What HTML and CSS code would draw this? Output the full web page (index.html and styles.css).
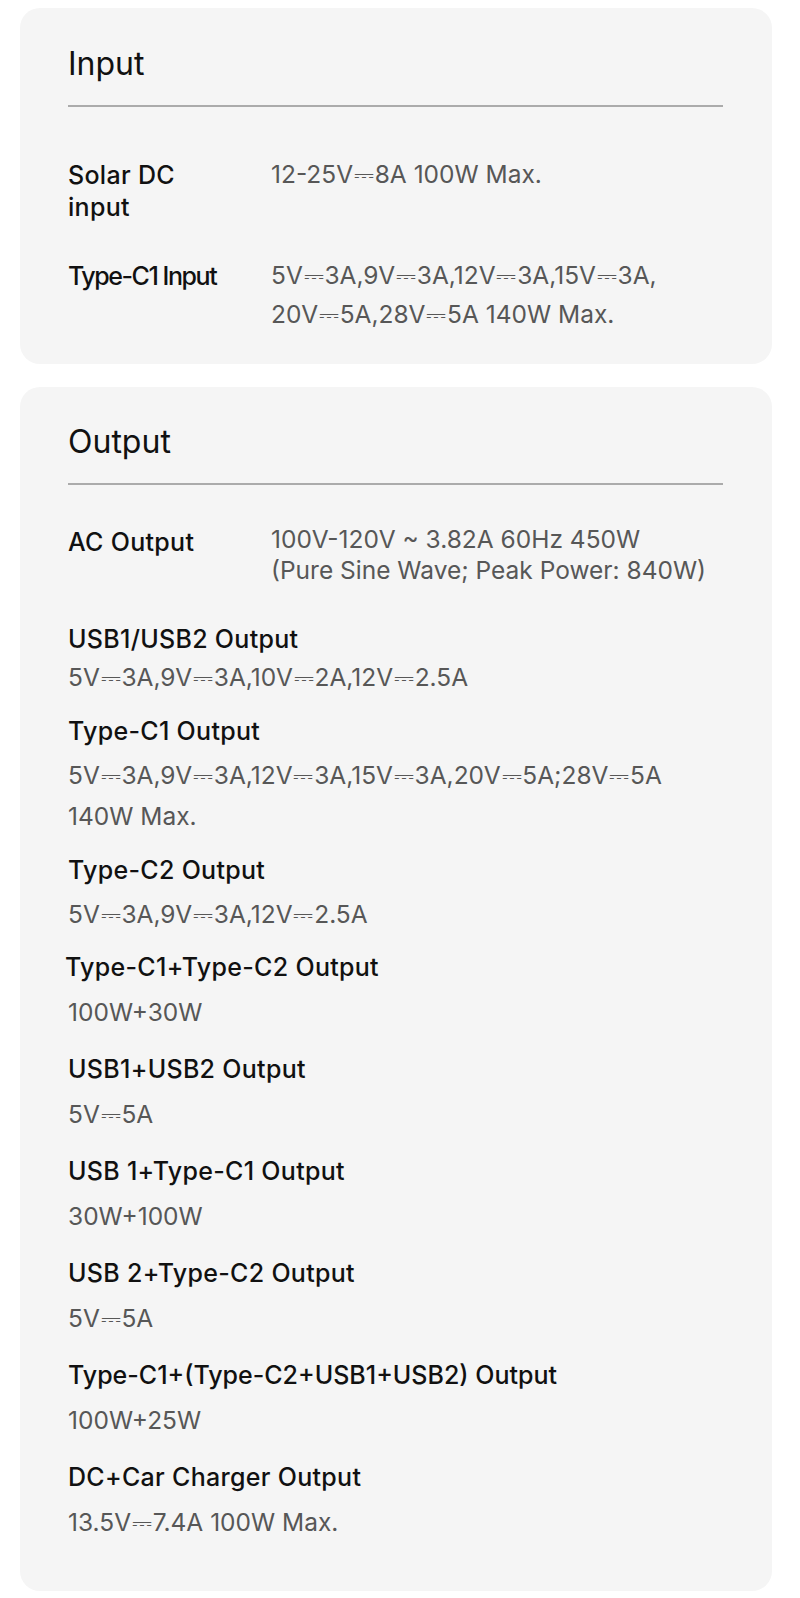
FILE: index.html
```html
<!DOCTYPE html>
<html lang="en">
<head>
<meta charset="utf-8">
<title>Specifications</title>
<link rel="stylesheet" href="styles.css">
</head>
<body>
<main class="page">
  <section class="card card-input">
    <h2 class="card-title">Input</h2>
    <div class="rows rows-input">
      <div class="row">
        <div class="label">Solar DC<br>input</div>
        <div class="value">12-25V<span class="dc">⎓</span>8A 100W Max.</div>
      </div>
      <div class="row">
        <div class="label label-condensed">Type-C1 Input</div>
        <div class="value">5V<span class="dc">⎓</span>3A,9V<span class="dc">⎓</span>3A,12V<span class="dc">⎓</span>3A,15V<span class="dc">⎓</span>3A,<br>20V<span class="dc">⎓</span>5A,28V<span class="dc">⎓</span>5A 140W Max.</div>
      </div>
    </div>
  </section>

  <section class="card card-output">
    <h2 class="card-title">Output</h2>
    <div class="rows rows-output">
      <div class="row row-ac">
        <div class="label">AC Output</div>
        <div class="value">100V-120V ~ 3.82A 60Hz 450W<br>(Pure Sine Wave; Peak Power: 840W)</div>
      </div>
    </div>
    <div class="specs specs-tight">
      <div class="spec spec-first">
        <div class="label">USB1/USB2 Output</div>
        <div class="value">5V<span class="dc">⎓</span>3A,9V<span class="dc">⎓</span>3A,10V<span class="dc">⎓</span>2A,12V<span class="dc">⎓</span>2.5A</div>
      </div>
      <div class="spec">
        <div class="label">Type-C1 Output</div>
        <div class="value">5V<span class="dc">⎓</span>3A,9V<span class="dc">⎓</span>3A,12V<span class="dc">⎓</span>3A,15V<span class="dc">⎓</span>3A,20V<span class="dc">⎓</span>5A;28V<span class="dc">⎓</span>5A<br>140W Max.</div>
      </div>
      <div class="spec">
        <div class="label">Type-C2 Output</div>
        <div class="value">5V<span class="dc">⎓</span>3A,9V<span class="dc">⎓</span>3A,12V<span class="dc">⎓</span>2.5A</div>
      </div>
    </div>
    <div class="specs specs-loose">
      <div class="spec">
        <div class="label label-shift">Type-C1+Type-C2 Output</div>
        <div class="value">100W+30W</div>
      </div>
      <div class="spec">
        <div class="label">USB1+USB2 Output</div>
        <div class="value">5V<span class="dc">⎓</span>5A</div>
      </div>
      <div class="spec">
        <div class="label">USB 1+Type-C1 Output</div>
        <div class="value">30W+100W</div>
      </div>
      <div class="spec">
        <div class="label">USB 2+Type-C2 Output</div>
        <div class="value">5V<span class="dc">⎓</span>5A</div>
      </div>
      <div class="spec">
        <div class="label label-long">Type-C1+(Type-C2+USB1+USB2) Output</div>
        <div class="value">100W+25W</div>
      </div>
      <div class="spec">
        <div class="label">DC+Car Charger Output</div>
        <div class="value">13.5V<span class="dc">⎓</span>7.4A 100W Max.</div>
      </div>
    </div>
  </section>
</main>
</body>
</html>
```

FILE: styles.css
```css
* {
  box-sizing: border-box;
}

html, body {
  margin: 0;
  padding: 0;
  background: #ffffff;
}

body {
  font-family: Inter, "DejaVu Sans", "Liberation Sans", sans-serif;
  color: #141414;
}

.page {
  display: flex;
  flex-direction: column;
  gap: 23px;
  padding: 8px 28px 10px 20px;
}

.card {
  background: #f5f5f5;
  border-radius: 20px;
  padding: 36px 49px 0 48px;
}

.card-input {
  padding-bottom: 30px;
}

.card-output {
  padding-top: 35px;
  padding-bottom: 48px;
}

.card-title {
  margin: 0;
  font-size: 32px;
  line-height: 40px;
  font-weight: 400;
  color: #111;
  padding-bottom: 21px;
  border-bottom: 2px solid #ababab;
}

.label {
  font-size: 25px;
  font-weight: 500;
  letter-spacing: 0.3px;
  color: #111;
}

.value {
  font-size: 24.5px;
  font-weight: 400;
  color: #575757;
}

.dc {
  font-family: "DejaVu Sans", sans-serif;
  margin: 0 0.8px;
}

.rows {
  display: flex;
  flex-direction: column;
}

.rows-input {
  padding-top: 48px;
  gap: 33px;
}

.rows-output {
  padding-top: 39px;
}

.row {
  display: grid;
  grid-template-columns: 203px 1fr;
  align-items: start;
}

.rows-input .label {
  line-height: 32px;
  padding-top: 4px;
}

.rows-input .value {
  line-height: 39px;
}

.row-ac .label {
  line-height: 32px;
  padding-top: 2px;
}

.row-ac .value {
  line-height: 31px;
}

.label-condensed {
  letter-spacing: -1.45px;
}

.label-long {
  letter-spacing: 0;
}

.specs {
  display: flex;
  flex-direction: column;
}

.spec .label {
  line-height: 40px;
}

.spec .value {
  line-height: 41px;
}

.specs-tight {
  padding-top: 33px;
  gap: 13px;
}

.specs-tight .value {
  margin-top: 4px;
}

.specs-tight .spec-first .value {
  margin-top: -2px;
}

.specs-loose {
  padding-top: 12px;
  gap: 16px;
}

.specs-loose .value {
  margin-top: 5px;
}

.label-shift {
  margin-left: -3px;
}
```
